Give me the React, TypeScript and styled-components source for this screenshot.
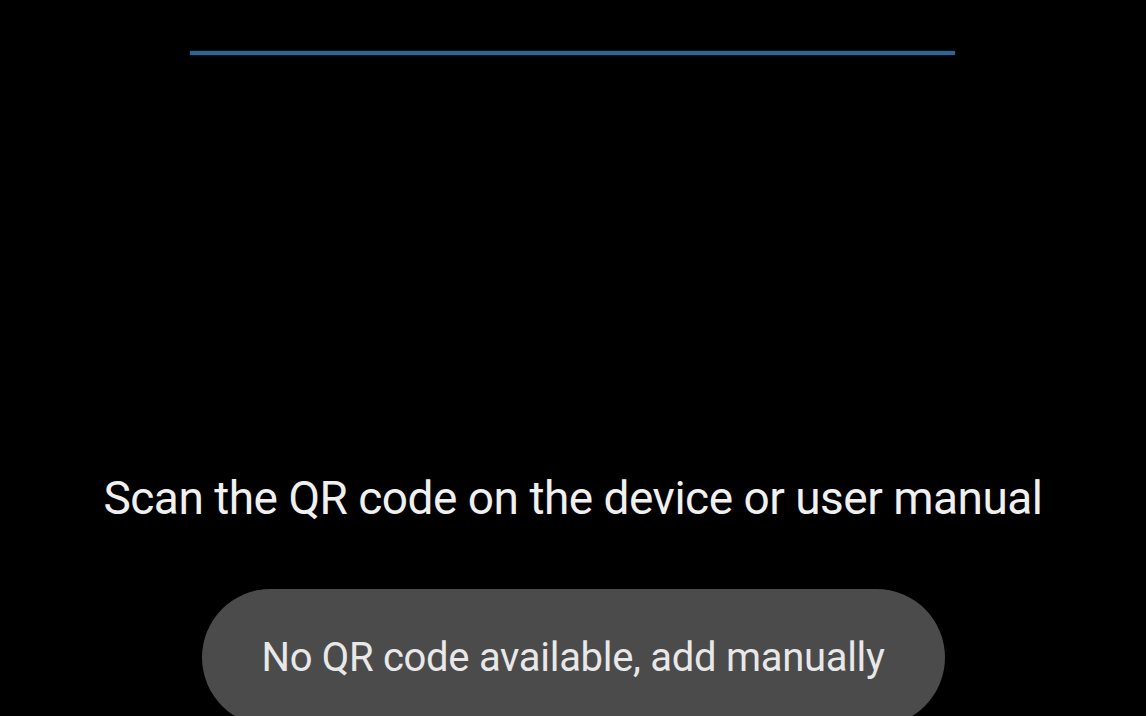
import React from "react";
import styled, { createGlobalStyle } from "styled-components";

const GlobalStyle = createGlobalStyle`
  html, body {
    margin: 0;
    padding: 0;
    background: #000;
  }
  body {
    font-family: Roboto, "Liberation Sans", Arial, sans-serif;
  }
`;

const Screen = styled.div`
  width: 1146px;
  height: 716px;
  background: #000;
  overflow: hidden;
  display: flex;
  flex-direction: column;
  align-items: center;
  padding-top: 51px;
  box-sizing: border-box;

  & > * {
    flex-shrink: 0;
  }
`;

const ScanLine = styled.div`
  width: 765px;
  height: 4px;
  margin-left: -1px;
  background: #2f6496;
  box-shadow: 0 0 2px rgba(47, 100, 150, 0.6);
`;

const Prompt = styled.p`
  margin: 415px 0 0;
  font-size: 46px;
  line-height: 56px;
  letter-spacing: -0.5px;
  color: #f0f0f0;
  font-weight: 400;
  white-space: nowrap;
`;

const ManualButton = styled.button`
  margin-top: 63px;
  width: 743px;
  height: 137px;
  border: none;
  border-radius: 69px;
  background: #4b4b4b;
  color: #e8e8e8;
  font-family: Roboto, "Liberation Sans", Arial, sans-serif;
  font-size: 40px;
  letter-spacing: -0.3px;
  line-height: 137px;
  padding: 0;
  cursor: pointer;
  white-space: nowrap;
`;

export default function App() {
  return (
    <>
      <GlobalStyle />
      <Screen>
        <ScanLine />
        <Prompt>Scan the QR code on the device or user manual</Prompt>
        <ManualButton>No QR code available, add manually</ManualButton>
      </Screen>
    </>
  );
}
